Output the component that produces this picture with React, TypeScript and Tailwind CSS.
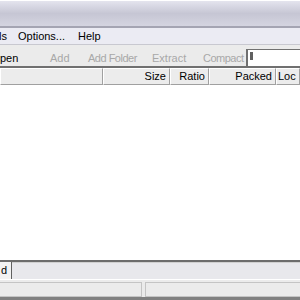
const font = { fontFamily: "'Liberation Sans', Arial, sans-serif" };

const columns = [
  { label: "", w: "w-[103px]" },
  { label: "Size", w: "w-[67px]" },
  { label: "Ratio", w: "w-[39px]" },
  { label: "Packed", w: "w-[67px]" },
  { label: "Loc", w: "flex-1" },
];

export default function App() {
  return (
    <div
      className="w-[300px] h-[300px] overflow-hidden flex flex-col bg-[#ece9e8] text-[11px] text-black"
      style={font}
    >
      {/* title bar */}
      <div className="h-[26px] shrink-0 border-t border-white bg-gradient-to-b from-[#e4e4ee] via-[#c6c6d4] to-[#d4d4e0]" />
      <div className="h-[2px] shrink-0 bg-[#a4a4b2]" />

      {/* menu */}
      <div className="h-[17px] shrink-0 flex items-center bg-[#ebebf3] border-b border-[#c8c8d0] whitespace-nowrap">
        <span className="-ml-[1px]">ls</span>
        <span className="ml-[11px]">Options...</span>
        <span className="ml-[13px]">Help</span>
      </div>

      {/* toolbar */}
      <div className="h-[21px] shrink-0 flex items-end bg-[#ebebeb] whitespace-nowrap">
        <span className="w-[50px]">pen</span>
        <span className="w-[38px] text-[#a8a8a8]">Add</span>
        <span className="w-[64px] text-[#a8a8a8] tracking-[-0.5px]">Add Folder</span>
        <span className="w-[51px] text-[#a8a8a8]">Extract</span>
        <span className="w-[43px] text-[#a8a8a8] tracking-[-0.5px]">Compact</span>
        <div className="flex-1 h-[17px] bg-white border-l-2 border-t border-[#707070] flex items-start pl-[2px] pt-[2px]">
          <div className="w-[3px] h-[8px] bg-[#606060]" />
        </div>
      </div>
      <div className="h-[2px] shrink-0 bg-[#707070]" />

      {/* column headers */}
      <div className="h-[17px] shrink-0 flex bg-[#ececec] whitespace-nowrap">
        {columns.map((c, i) => (
          <div
            key={i}
            className={`${c.w} h-full border-t border-l border-white border-r border-b border-r-[#a0a0a0] border-b-[#a0a0a0] flex items-center justify-end pr-[3px] overflow-hidden`}
          >
            {i === 4 ? <span className="w-full text-left pl-[1px]">{c.label}</span> : c.label}
          </div>
        ))}
      </div>

      {/* list */}
      <div className="flex-1 bg-white" />

      {/* tab strip */}
      <div className="h-[2px] shrink-0 bg-[#6c6c6c]" />
      <div className="h-[17px] shrink-0 flex bg-[#e8e8ec]">
        <div className="w-[12px] h-full bg-[#f2f2f2] border-r border-[#606060] flex items-center pl-[1px]">
          d
        </div>
        <div className="flex-1 border-t border-[#d0d0d0]" />
      </div>
      <div className="h-[1px] shrink-0 bg-white" />

      {/* status bar */}
      <div className="h-[17px] shrink-0 flex gap-[3px] bg-[#ebebeb] pt-[2px]">
        <div className="w-[142px] h-[15px] border border-[#c4c4c4] border-l-0" />
        <div className="flex-1 h-[15px] border border-[#c4c4c4] border-r-0" />
      </div>
      <div className="h-[3px] shrink-0 bg-[#808080]" />
    </div>
  );
}
